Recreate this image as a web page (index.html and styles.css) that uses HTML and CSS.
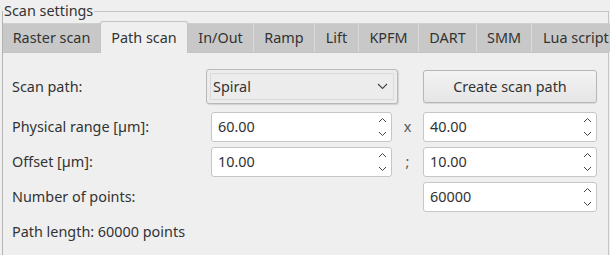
FILE: index.html
```html
<!DOCTYPE html>
<html>
<head>
    <title>Scan settings</title>
    <link rel="stylesheet" href="styles.css">
</head>
<body>
    <fieldset class="group">
        <legend>Scan settings</legend>
        <div class="tabs">
            <div class="tab raster">Raster scan</div>
            <div class="tab path active">Path scan</div>
            <div class="tab inout">In/Out</div>
            <div class="tab ramp">Ramp</div>
            <div class="tab lift">Lift</div>
            <div class="tab kpfm">KPFM</div>
            <div class="tab dart">DART</div>
            <div class="tab smm">SMM</div>
            <div class="tab lua">Lua script</div>
        </div>
        <div class="pane">
            <div class="form">
                <div class="lbl first">Scan path:</div>
                <div class="combo">
                    <div class="combo-inner">
                        <span>Spiral</span>
                        <svg width="11" height="7" viewBox="0 0 11 7"><polyline points="1,1 5.5,5.5 10,1" fill="none" stroke="#444" stroke-width="1.1"/></svg>
                    </div>
                </div>
                <button class="btn">Create scan path</button>

                <div class="lbl">Physical range [µm]:</div>
                <div class="spin indent"><span>60.00</span><span class="arrows"><svg width="9" height="6" viewBox="0 0 9 6"><polyline points="1,5 4.5,1.5 8,5" fill="none" stroke="#444"/></svg><svg width="9" height="6" viewBox="0 0 9 6"><polyline points="1,1 4.5,4.5 8,1" fill="none" stroke="#444"/></svg></span></div>
                <div class="sep">x</div>
                <div class="spin"><span>40.00</span><span class="arrows"><svg width="9" height="6" viewBox="0 0 9 6"><polyline points="1,5 4.5,1.5 8,5" fill="none" stroke="#444"/></svg><svg width="9" height="6" viewBox="0 0 9 6"><polyline points="1,1 4.5,4.5 8,1" fill="none" stroke="#444"/></svg></span></div>

                <div class="lbl">Offset [µm]:</div>
                <div class="spin indent"><span>10.00</span><span class="arrows"><svg width="9" height="6" viewBox="0 0 9 6"><polyline points="1,5 4.5,1.5 8,5" fill="none" stroke="#444"/></svg><svg width="9" height="6" viewBox="0 0 9 6"><polyline points="1,1 4.5,4.5 8,1" fill="none" stroke="#444"/></svg></span></div>
                <div class="sep">;</div>
                <div class="spin"><span>10.00</span><span class="arrows"><svg width="9" height="6" viewBox="0 0 9 6"><polyline points="1,5 4.5,1.5 8,5" fill="none" stroke="#444"/></svg><svg width="9" height="6" viewBox="0 0 9 6"><polyline points="1,1 4.5,4.5 8,1" fill="none" stroke="#444"/></svg></span></div>

                <div class="lbl">Number of points:</div>
                <div class="spin last"><span>60000</span><span class="arrows"><svg width="9" height="6" viewBox="0 0 9 6"><polyline points="1,5 4.5,1.5 8,5" fill="none" stroke="#444"/></svg><svg width="9" height="6" viewBox="0 0 9 6"><polyline points="1,1 4.5,4.5 8,1" fill="none" stroke="#444"/></svg></span></div>

                <div class="lbl wide">Path length: 60000 points</div>
            </div>
        </div>
    </fieldset>
</body>
</html>
```

FILE: styles.css
```css
body {
    margin: 0;
    padding-top: 2px;
    width: 610px;
    height: 255px;
    overflow: hidden;
    background: #efefef;
    font-family: "Noto Sans", sans-serif;
    font-size: 14.4px;
    color: #333;
}
.group {
    box-sizing: border-box;
    width: 607px;
    min-width: 0;
    height: 300px;
    margin: 0 0 0 2px;
    padding: 0;
    border: 1px solid #c4c4c4;
    border-left-color: #b4b4b4;
}
.group legend {
    padding: 0 1px;
    line-height: 18px;
}
.tabs {
    display: flex;
    align-items: flex-end;
    height: 31px;
    margin-top: 1px;
    width: max-content;
}
.tab {
    flex-shrink: 0;
    box-sizing: border-box;
    height: 29px;
    line-height: 28px;
    text-align: center;
    background: #c8c8c8;
    border-left: 1px solid #dadada;
    border-top: 1px solid #cfcfcf;
    white-space: nowrap;
}
.tab.raster { width: 97px; border-left: none; }
.tab.path { width: 88px; }
.tab.inout { width: 65px; }
.tab.ramp { width: 61px; }
.tab.lift { width: 44px; }
.tab.kpfm { width: 60px; }
.tab.dart { width: 58px; }
.tab.smm { width: 55px; }
.tab.lua { width: 84px; text-align: left; padding-left: 11px; }
.tab.active {
    height: 32px;
    line-height: 31px;
    background: #efefef;
    border: 1px solid #c4c4c4;
    border-bottom: none;
    border-radius: 3px 3px 0 0;
    position: relative;
    z-index: 1;
    margin-bottom: -1px;
}
.tab.active + .tab {
    border-left: none;
}
.pane {
    border-top: 1px solid #c4c4c4;
    padding: 16px 0 0 9px;
}
.form {
    display: grid;
    grid-template-columns: 194px 186px 31px 174px;
    grid-template-rows: 38px 31px 31px 31px 31px;
    row-gap: 4px;
    align-items: center;
}
.lbl {
    grid-column: 1;
    white-space: nowrap;
}
.lbl.first {
    align-self: start;
    line-height: 35px;
}
.lbl.wide {
    grid-column: 1 / -1;
}
.combo {
    grid-column: 2;
    align-self: start;
    box-sizing: border-box;
    height: 35px;
    margin-right: -6px;
    padding: 3px;
    border: 1px solid #b9b9b9;
    border-radius: 3px;
    background: #ececec;
    box-shadow: 1px 1px 1px rgba(0, 0, 0, 0.12);
}
.combo-inner {
    display: flex;
    align-items: center;
    justify-content: space-between;
    height: 100%;
    box-sizing: border-box;
    padding: 0 5px 0 2px;
    border: 1px solid #dadada;
}
.btn {
    grid-column: 4;
    align-self: start;
    margin-top: 1px;
    height: 33px;
    font: inherit;
    color: #333;
    border: 1px solid #b7b7b7;
    border-radius: 3px;
    background: linear-gradient(#f3f3f3, #e5e5e5);
    box-shadow: 0 1px 1px rgba(0, 0, 0, 0.1);
}
.spin {
    display: flex;
    align-items: center;
    justify-content: space-between;
    box-sizing: border-box;
    height: 30px;
    padding: 0 4px 0 6px;
    background: #fff;
    border: 1px solid #c6c6c6;
    border-radius: 3px;
}
.spin.indent {
    margin-left: 5px;
}
.spin.last {
    grid-column: 4;
}
.arrows {
    display: flex;
    flex-direction: column;
    gap: 8px;
}
.arrows svg {
    display: block;
}
.sep {
    text-align: center;
    color: #555;
}
```
